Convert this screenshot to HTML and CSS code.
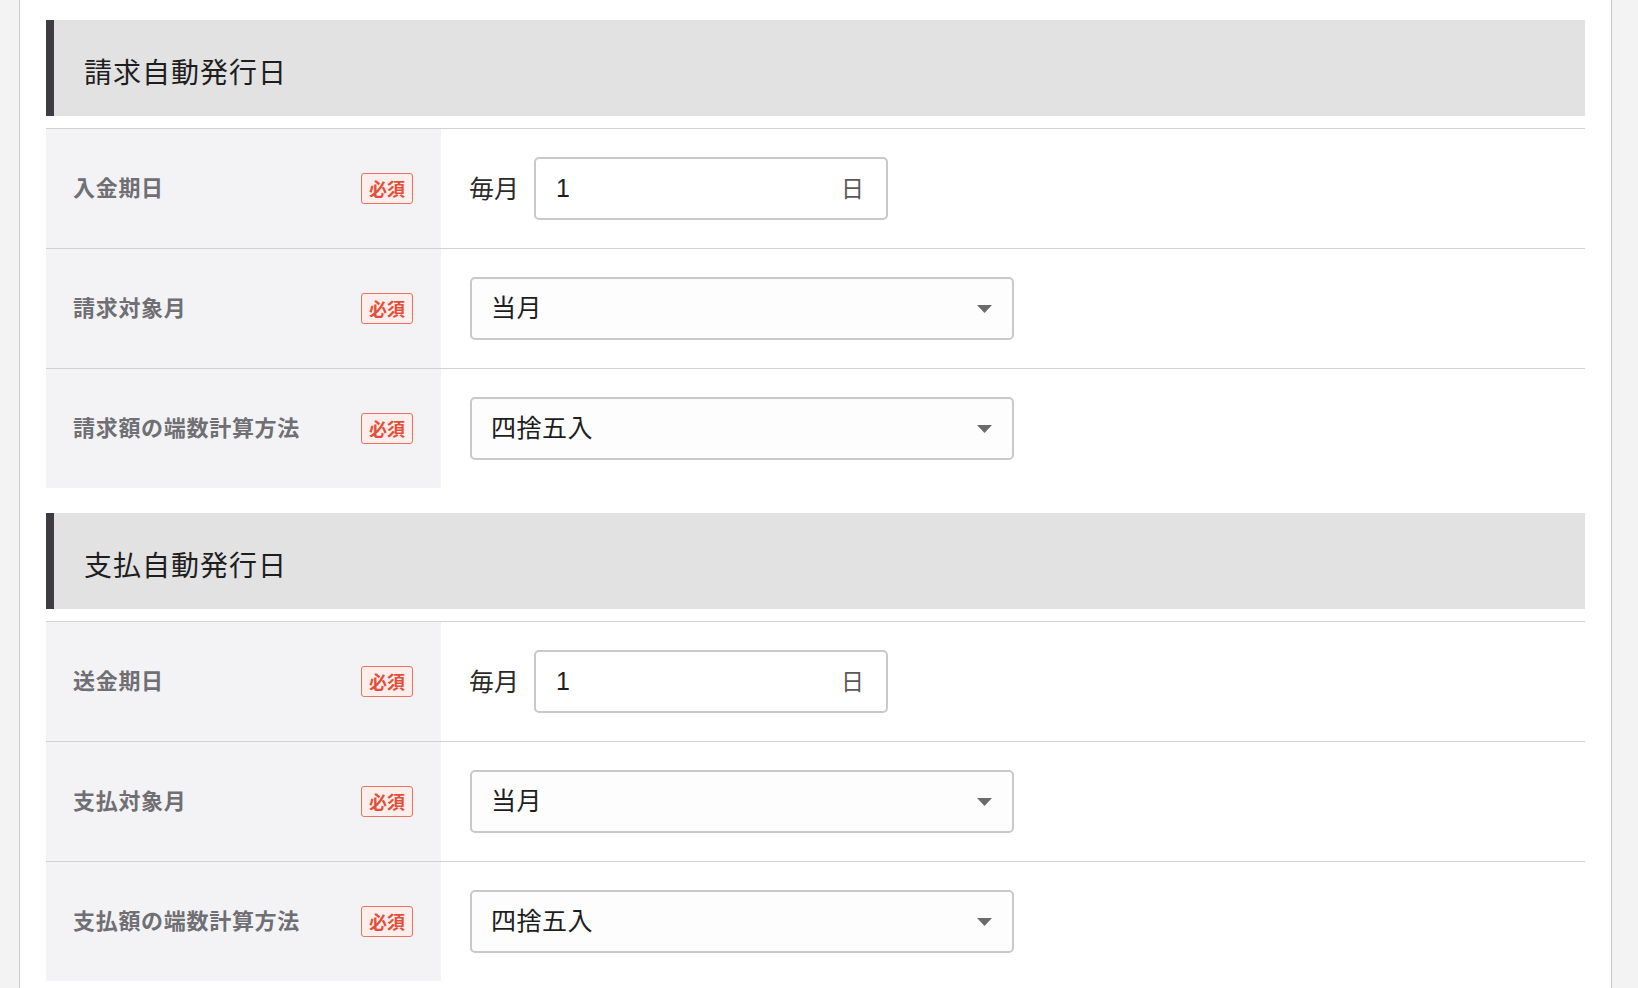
FILE: index.html
```html
<!DOCTYPE html>
<html lang="ja">
<head>
<meta charset="utf-8">
<title>自動発行日</title>
<link rel="stylesheet" href="styles.css">
</head>
<body>
<div class="layout">
  <div class="side-left"></div>
  <main class="panel">
    <section class="section">
      <h2 class="section-title">請求自動発行日</h2>
      <div class="table">
        <div class="row">
          <div class="label"><span class="label-text">入金期日</span><span class="badge">必須</span></div>
          <div class="value">
            <span class="prefix">毎月</span>
            <div class="day-input"><span class="day-val">1</span><span class="day-suffix">日</span></div>
          </div>
        </div>
        <div class="row">
          <div class="label"><span class="label-text">請求対象月</span><span class="badge">必須</span></div>
          <div class="value">
            <div class="select"><span class="select-text">当月</span><svg class="caret" width="15" height="8" viewBox="0 0 15 8"><path d="M0 0H15L7.5 8Z" fill="#6b6b6b"/></svg></div>
          </div>
        </div>
        <div class="row">
          <div class="label"><span class="label-text">請求額の端数計算方法</span><span class="badge">必須</span></div>
          <div class="value">
            <div class="select"><span class="select-text">四捨五入</span><svg class="caret" width="15" height="8" viewBox="0 0 15 8"><path d="M0 0H15L7.5 8Z" fill="#6b6b6b"/></svg></div>
          </div>
        </div>
      </div>
    </section>
    <section class="section">
      <h2 class="section-title">支払自動発行日</h2>
      <div class="table">
        <div class="row">
          <div class="label"><span class="label-text">送金期日</span><span class="badge">必須</span></div>
          <div class="value">
            <span class="prefix">毎月</span>
            <div class="day-input"><span class="day-val">1</span><span class="day-suffix">日</span></div>
          </div>
        </div>
        <div class="row">
          <div class="label"><span class="label-text">支払対象月</span><span class="badge">必須</span></div>
          <div class="value">
            <div class="select"><span class="select-text">当月</span><svg class="caret" width="15" height="8" viewBox="0 0 15 8"><path d="M0 0H15L7.5 8Z" fill="#6b6b6b"/></svg></div>
          </div>
        </div>
        <div class="row">
          <div class="label"><span class="label-text">支払額の端数計算方法</span><span class="badge">必須</span></div>
          <div class="value">
            <div class="select"><span class="select-text">四捨五入</span><svg class="caret" width="15" height="8" viewBox="0 0 15 8"><path d="M0 0H15L7.5 8Z" fill="#6b6b6b"/></svg></div>
          </div>
        </div>
      </div>
    </section>
  </main>
  <div class="side-right"></div>
</div>
</body>
</html>
```
FILE: styles.css
```css
* { box-sizing: border-box; }
html, body {
  margin: 0;
  padding: 0;
  height: 100%;
  background: #f3f3f3;
  font-family: "Noto Sans CJK JP", "Noto Sans", sans-serif;
  color: #222;
}
.layout {
  display: flex;
  height: 988px;
  overflow: hidden;
}
.side-left {
  width: 20px;
  flex: none;
  background: #f3f3f3;
  border-right: 1px solid #cfcfcf;
}
.panel {
  width: 1592px;
  flex: none;
  background: #fff;
  border-right: 1px solid #c6c6c6;
  padding: 20px 26px 0 26px;
}
.side-right {
  flex: 1;
  background: #f3f3f3;
}
.section + .section {
  margin-top: 25px;
}
.section-title {
  margin: 0;
  height: 96px;
  display: flex;
  align-items: center;
  background: #e2e2e2;
  border-left: 8px solid #3e3b43;
  padding: 6px 0 0 30px;
  font-size: 28px;
  font-weight: 400;
  color: #1e1e1e;
  letter-spacing: 1px;
}
.table {
  margin-top: 12px;
  border-top: 1px solid #d2d2d2;
}
.row {
  display: flex;
  height: 120px;
  border-bottom: 1px solid #d2d2d2;
}
.row:last-child {
  border-bottom: none;
  height: 119px;
}
.label {
  width: 395px;
  flex: none;
  background: #f3f3f5;
  display: flex;
  align-items: center;
  justify-content: space-between;
  padding: 0 28px 0 27px;
}
.label-text {
  font-size: 22px;
  font-weight: 700;
  color: #6f6f74;
  letter-spacing: 0.7px;
  padding-bottom: 6px;
}
.badge {
  width: 52px;
  height: 31px;
  display: flex;
  align-items: center;
  justify-content: center;
  border: 1px solid #e9735f;
  border-radius: 3px;
  background: #fdeeec;
  color: #e2503b;
  font-size: 18px;
  font-weight: 700;
  padding-bottom: 2px;
}
.value {
  flex: 1;
  display: flex;
  align-items: center;
  padding-left: 28px;
}
.prefix {
  font-size: 25px;
  color: #2a2a2a;
  margin-right: 15px;
  padding-bottom: 4px;
}
.day-input {
  width: 354px;
  height: 63px;
  border: 2px solid #c9c9c9;
  border-radius: 5px;
  background: #fff;
  display: flex;
  align-items: center;
  justify-content: space-between;
  padding: 0 22px 0 20px;
}
.day-val {
  font-size: 25px;
  color: #1e1e1e;
  font-family: "Liberation Sans", "Noto Sans CJK JP", sans-serif;
}
.day-suffix {
  font-size: 23px;
  color: #5a5a5a;
  padding-bottom: 4px;
}
.select {
  width: 544px;
  margin-left: 1px;
  height: 63px;
  border: 2px solid #c9c9c9;
  border-radius: 5px;
  background: #fdfdfe;
  display: flex;
  align-items: center;
  justify-content: space-between;
  padding: 0 20px 0 19px;
}
.select-text {
  font-size: 25px;
  color: #1e1e1e;
  letter-spacing: 0.5px;
  padding-bottom: 5px;
}
.caret {
  display: block;
}
```
